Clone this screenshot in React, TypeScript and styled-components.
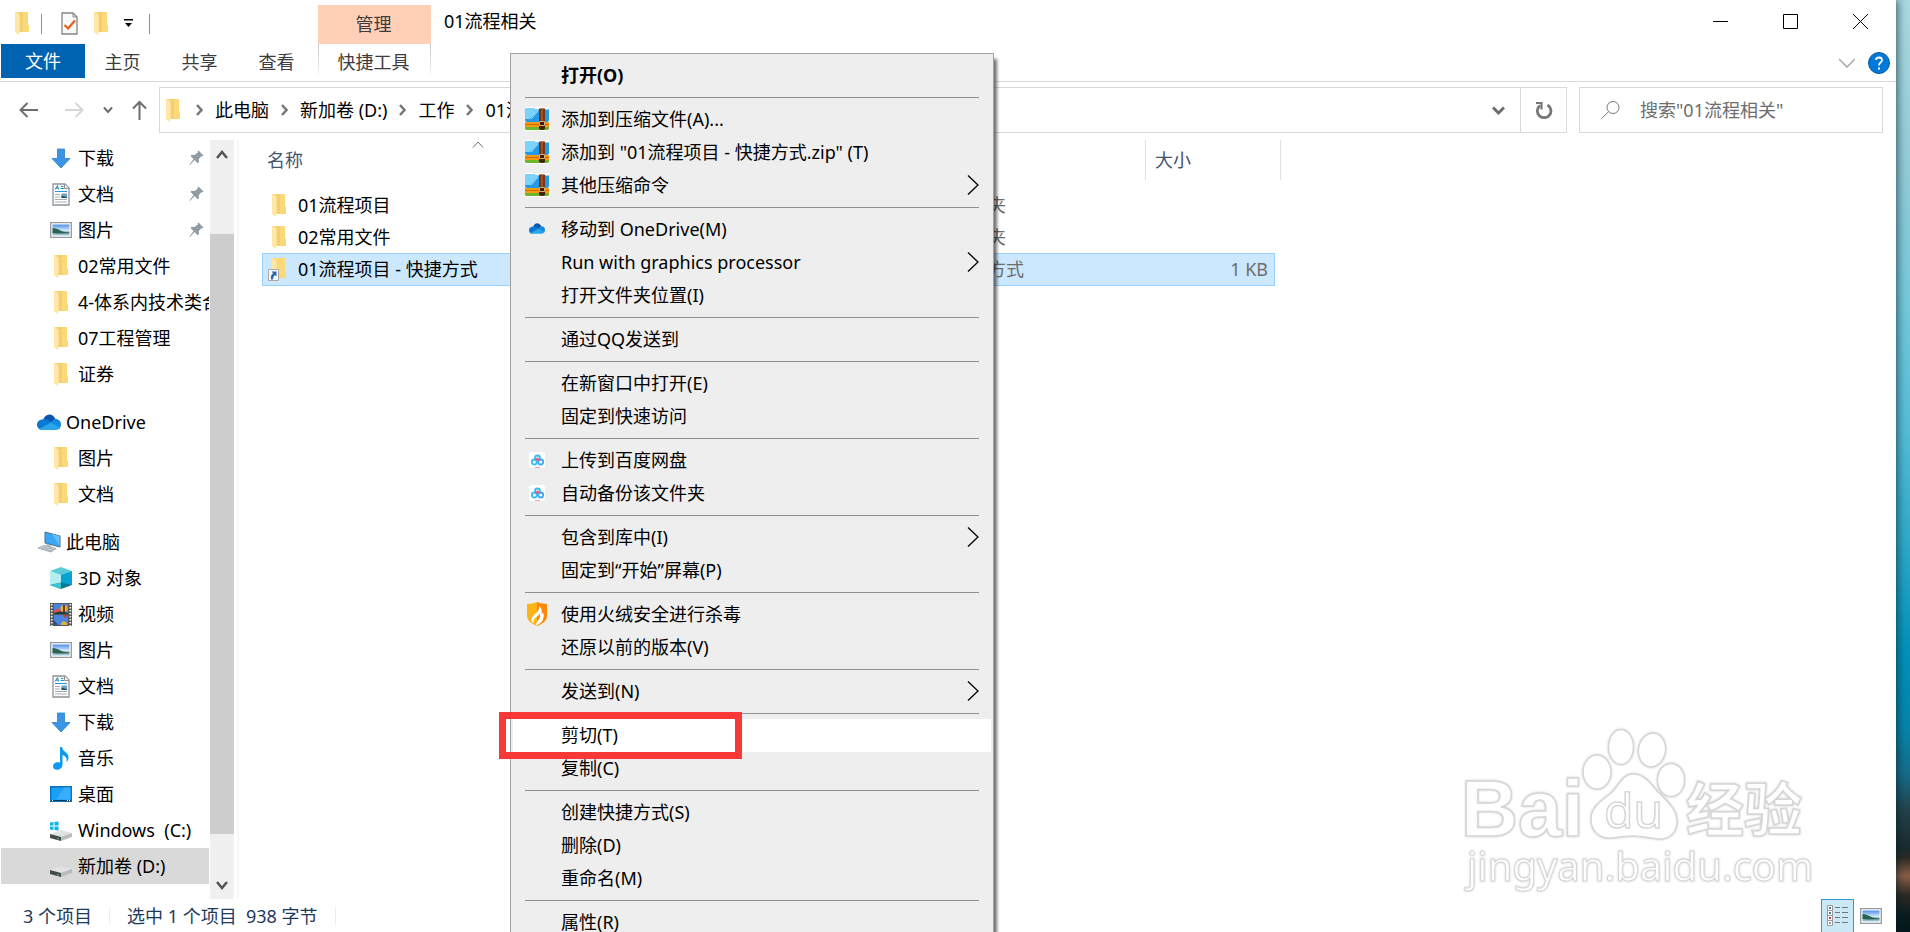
import React from "react";
import styled, { createGlobalStyle, css } from "styled-components";

const FONT = '"Noto Sans", "Noto Sans CJK SC", sans-serif';

const GlobalStyle = createGlobalStyle`
  *, *::before, *::after { box-sizing: border-box; }
  body { margin: 0; overflow: hidden; font-family: ${FONT}; font-size: 18px; line-height: 24px; color: #000; }
  button, input { font: inherit; color: inherit; }
  button { margin: 0; padding: 0; border: 0; background: none; cursor: default; }
  a { color: inherit; text-decoration: none; }
  ul { margin: 0; padding: 0; list-style: none; }
  svg { display: block; flex: none; }
`;

/* ---------- window frame ---------- */

const Desktop = styled.div`
  position: relative;
  display: flex;
  height: 100vh;
  overflow: hidden;
  padding-right: 14px;
  background: linear-gradient(
    #a9d8e0 0%, #93cbd6 18%, #76c8da 32%, #56bcd6 46%, #30a9c8 58%, #0390ba 70%,
    #0685aa 78%, #176d8a 83%, #24414a 87%, #1a2b2e 91%, #2c2a26 92%, #8a5f45 94%, #2f2a25 96%, #0c1d20 98%, #06171b 100%
  );
`;

const Window = styled.main`
  display: flex;
  flex: 1;
  min-width: 0;
  flex-direction: column;
  background: #fff;
  box-shadow: 2px 0 8px rgba(0, 30, 40, 0.6);
`;

const TitleBar = styled.header`
  display: flex;
  height: 44px;
  flex: none;
`;

const QuickAccess = styled.div`
  display: flex;
  width: 318px;
  height: 46px;
  align-items: center;
  padding-left: 15px;
`;

const QuickButton = styled.button<{ $gap: number }>`
  margin-right: ${(p) => p.$gap}px;
`;

const QuickRule = styled.span<{ $gap: number }>`
  width: 1px;
  height: 20px;
  margin-top: 2px;
  margin-right: ${(p) => p.$gap}px;
  background: #8c8c8c;
`;

const ContextGroup = styled.div`
  width: 113px;
  height: 39px;
  margin-top: 5px;
  padding: 7px 2px 0 0;
  background: #ffcfb8;
  color: #3c3c3c;
  text-align: center;
`;

const WindowTitle = styled.h1`
  flex: 1;
  margin: 0;
  padding: 9px 13px;
  font-size: 18px;
  font-weight: 400;
`;

const WindowButtons = styled.div`
  display: flex;
  gap: 1px;
  padding-right: 1px;
`;

const WindowButton = styled.button`
  display: grid;
  width: 69px;
  height: 43px;
  place-items: center;
`;

const Ribbon = styled.nav`
  display: flex;
  height: 38px;
  flex: none;
  border-bottom: 1px solid #d9d9d9;
`;

const RibbonTabs = styled.div`
  display: flex;
  width: 318px;
  padding-left: 1px;
`;

const FileTab = styled.button`
  width: 84px;
  height: 34px;
  background: #0063b1;
  color: #fff;
`;

const RibbonTab = styled.button`
  width: 77px;
  height: 37px;
  padding: 0 2px 2px 0;
  color: #3c3c3c;
`;

const ToolTab = styled.button`
  width: 113px;
  height: 37px;
  padding: 0 2px 2px 0;
  border: solid;
  border-width: 0 1px;
  border-image: linear-gradient(#c8c8c8, #e4e4e4 60%, #fff 90%) 1;
  color: #3c3c3c;
`;

const RibbonTools = styled.div`
  display: flex;
  flex: 1;
  align-items: center;
  justify-content: flex-end;
  gap: 13px;
  padding-right: 6px;
`;

/* ---------- address row ---------- */

const AddressRow = styled.div`
  display: flex;
  height: 58px;
  flex: none;
  padding: 5px 13px 7px 0;
`;

const NavButtons = styled.div`
  display: flex;
  width: 159px;
  align-items: center;
  justify-content: flex-end;
  gap: 19px;
  padding-right: 12px;
`;

const HistoryButtons = styled.div`
  display: flex;
  gap: 27px;
`;

const Box = styled.div`
  display: flex;
  border: 1px solid #d9d9d9;
`;

const AddressBox = styled(Box)`
  flex: 1;
  align-items: center;
  padding-left: 6px;
`;

const Crumbs = styled.div`
  display: flex;
  flex: 1;
  align-items: center;
  gap: 12px;
  padding-left: 16px;
`;

const DropButton = styled.button`
  display: grid;
  width: 44px;
  height: 44px;
  place-items: center;
`;

const RefreshButton = styled(DropButton)`
  width: 46px;
  border-left: 1px solid #d9d9d9;
`;

const SearchBox = styled.label`
  display: flex;
  width: 304px;
  margin-left: 12px;
  align-items: center;
  gap: 20px;
  padding-left: 21px;
  border: 1px solid #d9d9d9;
`;

const SearchInput = styled.input`
  flex: 1;
  min-width: 0;
  padding: 0;
  border: 0;
  outline: 0;
  background: none;
  &::placeholder { color: #6d6d6d; opacity: 1; }
`;

/* ---------- navigation pane ---------- */

const Body = styled.div`
  display: flex;
  flex: 1;
  min-height: 0;
`;

const Tree = styled.ul`
  width: 210px;
  overflow: hidden;
`;

const TreeLink = styled.a<{ $root?: boolean; $active?: boolean }>`
  display: flex;
  height: 36px;
  margin: ${(p) => (p.$root ? "12px 1px 0 1px" : "0 1px")};
  align-items: center;
  padding-left: ${(p) => (p.$root ? 36 : 48)}px;
  white-space: pre;
  overflow: hidden;
  background: ${(p) => (p.$active ? "#d9d9d9" : "transparent")};
`;

const TreeIcon = styled.span`
  display: grid;
  width: 24px;
  flex: none;
  place-items: center;
  margin-right: 5px;
`;

const Pin = styled.span`
  margin-left: auto;
  padding-right: 5px;
`;

const ScrollTrack = styled.div`
  display: flex;
  width: 24px;
  flex-direction: column;
  align-items: center;
  background: #f0f0f0;
`;

const ScrollArrow = styled.button`
  display: grid;
  width: 24px;
  height: 28px;
  place-items: center;
`;

const ScrollThumb = styled.div`
  width: 24px;
  flex: 600;
  background: #cdcdcd;
`;

const ScrollSpace = styled.div<{ $grow: number }>`
  flex: ${(p) => p.$grow};
`;

const PaneRule = styled.div`
  width: 2px;
  margin: 0 23px 0 3px;
  background: #f7f7f7;
`;

/* ---------- file list ---------- */

const FileTable = styled.table`
  width: 1019px;
  flex: none;
  align-self: flex-start;
  table-layout: fixed;
  border-collapse: separate;
  border-spacing: 0;
`;

const Column = styled.col<{ $width: number }>`
  width: ${(p) => p.$width}px;
`;

const HeadCell = styled.th`
  padding: 0 0 9px;
  font-weight: 400;
  text-align: left;
  color: #44546e;
`;

const HeadLabel = styled.div<{ $rule?: boolean }>`
  position: relative;
  height: 40px;
  padding: 8px 9px;
  padding-left: ${(p) => (p.$rule ? 9 : 5)}px;
  border-left: ${(p) => (p.$rule ? "1px solid #e1e1e1" : "0")};
`;

const EndRule = styled.div`
  height: 40px;
  border-right: 1px solid #e1e1e1;
`;

const SortMark = styled.span`
  position: absolute;
  top: 1px;
  left: 210px;
`;

const FileRow = styled.tr<{ $selected?: boolean }>`
  & > td {
    height: 32px;
    padding: 0;
    white-space: nowrap;
    color: #6d6d6d;
    ${(p) =>
      p.$selected &&
      css`
        height: 33px;
        padding-bottom: 1px;
        border: solid #99d1ff;
        border-width: 1px 0;
        background: #cce8ff;
      `}
  }
  & > td:first-child { border-left-width: ${(p) => (p.$selected ? 1 : 0)}px; }
  & > td:nth-child(4) { padding-right: 6px; border-right-width: ${(p) => (p.$selected ? 1 : 0)}px; text-align: right; }
`;

const FileName = styled.div<{ $selected?: boolean }>`
  display: flex;
  align-items: center;
  gap: 9px;
  padding-left: ${(p) => (p.$selected ? 5 : 6)}px;
  color: #000;
`;

const FileIconSlot = styled.span`
  display: flex;
  width: 21px;
  justify-content: flex-end;
  padding-right: 3px;
`;

const TypeText = styled.div`
  padding-left: 7px;
`;

/* ---------- status bar ---------- */

const StatusBar = styled.footer`
  display: flex;
  height: 33px;
  flex: none;
  align-items: center;
  padding: 0 14px 0 23px;
  color: #1e395b;
  white-space: pre;
`;

const StatusRule = styled.span`
  width: 1px;
  height: 18px;
  margin: 0 17px;
  background: #ececec;
`;

const ViewButtons = styled.div`
  display: flex;
  height: 33px;
  margin-left: auto;
  align-items: center;
  gap: 6px;
`;

const ViewButton = styled.button<{ $on?: boolean }>`
  display: grid;
  height: 33px;
  min-width: ${(p) => (p.$on ? 33 : 22)}px;
  place-items: center;
  ${(p) =>
    p.$on &&
    css`
      border: 1px solid #3399cc;
      border-bottom: 0;
      background: #cbe8f6;
    `}
`;

/* ---------- context menu ---------- */

const Menu = styled.div`
  position: absolute;
  top: 53px;
  left: 510px;
  width: 484px;
  padding: 5px 2px;
  border: 1px solid #a0a0a0;
  background: #eee;
  box-shadow: 4px 5px 3px -1px rgba(0, 0, 0, 0.55);
`;

const MenuItem = styled.button<{ $bold?: boolean; $hot?: boolean }>`
  position: relative;
  display: flex;
  width: 100%;
  height: 33px;
  align-items: center;
  padding: 0 12px 2px 12px;
  font-weight: ${(p) => (p.$bold ? 700 : 400)};
  background: ${(p) => (p.$hot ? "#fff" : "transparent")};
  text-align: left;
`;

const MenuIcon = styled.span`
  display: grid;
  width: 24px;
  height: 24px;
  margin-right: 12px;
  place-items: center;
`;

const MenuLabel = styled.span`
  flex: 1;
`;

const MenuRule = styled.hr`
  height: 1px;
  margin: 5px 12px;
  border: 0;
  background: #919191;
`;

const Highlight = styled.span`
  position: absolute;
  top: -7px;
  left: -14px;
  width: 243px;
  height: 47px;
  border: 7px solid #fb3838;
  pointer-events: none;
`;

const Watermark = styled.svg`
  position: absolute;
  right: 96px;
  bottom: 30px;
  filter: drop-shadow(0 0 1px rgba(0, 0, 0, 0.2));
`;

/* ---------- icons ---------- */

const FolderIcon = () => (
  <svg width="14" height="23" viewBox="0 0 14 23">
    <path d="M0 0h13v12.5l1 1V20H3z" fill="#fbd978" />
    <path d="M4 0h4v20H4z" fill="#f3cf72" />
    <path d="M0 0l4.6 2.6v18L3.8 23 0 20.2z" fill="#ffe8a6" />
  </svg>
);

const ShortcutIcon = () => (
  <svg width="18" height="23" viewBox="0 0 18 23">
    <path d="M4 0h13v12.5l1 1V20H4z" fill="#fbd978" />
    <path d="M4 0l4.6 2.6v18L4 20z" fill="#ffe8a6" />
    <path d="M.5 11.500h10v11H.5z" fill="#f8fbff" stroke="#a8a8a8" />
    <path d="M3.500 13.500h5v5l-1.700-1.600Q5 18.500 5 21.500H3Q2 17.500 5.200 15.200z" fill="#2d66a8" />
  </svg>
);

const DownloadIcon = () => (
  <svg width="20" height="21" viewBox="0 0 20 21">
    <path d="M6.500 1h7v9.500H19L10 20 1 10.500h5.500z" fill="#3a96e4" stroke="#2a7fc9" strokeWidth=".8" />
  </svg>
);

const DocumentIcon = () => (
  <svg width="18" height="23" viewBox="0 0 18 23">
    <path d="M1 1h12l4 4v17H1z" fill="#fff" stroke="#8d9298" strokeWidth="1.300" />
    <path d="M12.500 1v4.500H17" fill="#eee" stroke="#8d9298" />
    <path d="M3 8.500h12M8.500 5.500H12M9 3.500h2.500" stroke="#2496d8" strokeWidth="1.200" />
    <path d="M3 6.500L5.500 2.500l1 4M4 5.200h2.500" stroke="#2585bd" fill="none" />
    <path d="M3 11.500h5M3 14h5M3 16.500h12M3 19h12" stroke="#a8adb1" />
    <path d="M9.500 10.500H15v4.500H9.500z" fill="#6fa3c8" />
    <path d="M9.500 12.500l3 1 2.500.5v1H9.500z" fill="#24505f" />
  </svg>
);

const PictureIcon = () => (
  <svg width="22" height="16" viewBox="0 0 22 16">
    <defs>
      <linearGradient id="sky" x2="0" y2="1">
        <stop stopColor="#4e8fe8" />
        <stop offset=".55" stopColor="#d3e9f6" />
        <stop offset=".7" stopColor="#7fa8ba" />
        <stop offset="1" stopColor="#a7cbd8" />
      </linearGradient>
    </defs>
    <path d="M.7.700h20.600v14.600H.7z" fill="#fff" stroke="#969a9e" strokeWidth="1.300" />
    <path d="M2.500 2.500h17v11h-17z" fill="url(#sky)" />
    <path d="M2.500 6c3 0 5 1 8 2.500s6 1.500 9 2v.8l-12 .2-5-.5z" fill="#2c6152" />
  </svg>
);

const CloudIcon = ({ width = 24 }: { width?: number }) => (
  <svg width={width} height={(width * 16) / 24} viewBox="0 0 24 16">
    <path d="M6 6C8-.5 15-2 18.500 5L12 11z" fill="#0a55ad" />
    <path d="M5 5.500c5-1 7 1 13 4.500L4 16C-2 14-1 6 5 5.500z" fill="#0b78d2" />
    <path d="M14 8l4.500-3c6 0 7 7 3.500 10l-7-2z" fill="#1489df" />
    <path d="M2 15l12-6.500 9 5.500q-1 2-4 2H5q-2 0-3-1z" fill="#2aa5ea" />
  </svg>
);

const ComputerIcon = () => (
  <svg width="24" height="22" viewBox="0 0 24 22">
    <path d="M8 1l15 4v11L8 12z" fill="#39a7f5" stroke="#4b7089" />
    <path d="M15 3l7.500 2v10z" fill="#62bdf9" />
    <path d="M10 12.500l4 2v2l-5-2z" fill="#b5bbc2" />
    <path d="M1 17l6-2.500 12 3-5 3.500z" fill="#dce0e6" stroke="#929aa3" strokeWidth=".8" />
    <path d="M4 17l11 3M6 16l11 2.500" stroke="#a4aab3" />
  </svg>
);

const CubeIcon = () => (
  <svg width="22" height="22" viewBox="0 0 22 22">
    <path d="M11 0l11 4-11 5L0 4z" fill="#5ccbd8" />
    <path d="M0 4l11 4v10.500L0 18z" fill="#b5eef0" />
    <path d="M22 4L11 8v10.500L22 18z" fill="#08a3d0" />
    <path d="M0 18l11-2.500L22 18l-11 4z" fill="#08788f" />
    <path d="M0 18l11-2.500V22z" fill="#38c3d6" />
  </svg>
);

const VideoIcon = () => (
  <svg width="22" height="23" viewBox="0 0 22 23">
    <path d="M0 0h22v23H0z" fill="#55585a" />
    <path d="M1.700 1v22M20.300 1v22" stroke="#f2f2f2" strokeWidth="1.700" strokeDasharray="1.600 1.400" />
    <path d="M4 1h14v10H4zM4 12h14v10H4z" fill="#4c85e0" />
    <path d="M4 8l4-3 4 4v2H4z" fill="#d9544f" />
    <path d="M4 10q7-3 14 0v1H4z" fill="#1d3f38" />
    <circle cx="14" cy="5.500" r="3.500" fill="#e8b32b" />
    <path d="M13 2h2v7h-2z" fill="#7b3422" />
    <path d="M13 12h5l-3 3z" fill="#c33b2d" />
    <path d="M11 22c0-5 6-5 6 0z" fill="#e8b32b" />
    <path d="M4 17l4 5H4z" fill="#24507a" />
  </svg>
);

const MusicIcon = () => (
  <svg width="18" height="23" viewBox="0 0 18 23">
    <path d="M8 0h2c.5 5 7 5 6.500 11-.3 3-2 4-2 4 1-5-2-6-4-7v10c-.3 6-9.500 6-9.500 1.500C1 15.500 5 14.500 8 15.500z" fill="#0d9bf2" />
  </svg>
);

const DesktopIcon = () => (
  <svg width="22" height="16" viewBox="0 0 22 16">
    <path d="M.7.700h20.600v14.600H.7z" fill="#18a0fb" stroke="#0b71ba" strokeWidth="1.400" />
    <path d="M14 1.500h6.500v12H6z" fill="#39adfb" />
    <path d="M1 14.500h20" stroke="#0f3b5d" />
    <path d="M2 14.500h1M17 14.500h1M19 14.500h1" stroke="#fff" />
  </svg>
);

const DriveIcon = ({ windows }: { windows?: boolean }) => (
  <svg width="22" height="22" viewBox="0 0 22 22">
    <path d="M0 15l11-4 11 3-11 4.500z" fill="#e0e2e4" />
    <path d="M0 15l11 3v4L0 19z" fill="#45484a" />
    <path d="M11 18l11-4v4l-11 4z" fill="#b9bcbf" />
    <path d="M7 19.500l2 .5" stroke="#36d24b" strokeWidth="1.200" />
    {windows && <path d="M0 3.500l3.500-.5v3.500H0zM4.500 3L8.500 2.500v4h-4zM0 7.500h3.500V11L0 10.500zM4.500 7.500h4v4l-4-.5z" fill="#0bb3ee" />}
  </svg>
);

const PinIcon = () => (
  <svg width="15" height="16" viewBox="0 0 15 16">
    <path d="M9.500.5l5 5-1.500 1-.8-.3-2.500 3 .3 3-1.200 1-3.300-3.200L1 15l-.5-.5L4.500 9 1.600 6l1-1.200 3 .3 3.200-2.600-.3-1z" fill="#8f9ba5" />
  </svg>
);

type ChevronProps = { w: number; h: number; d: string; color?: string; stroke?: number };

const Chevron = ({ w, h, d, color = "#6d6d6d", stroke = 2 }: ChevronProps) => (
  <svg width={w} height={h} viewBox={`0 0 ${w} ${h}`} fill="none" stroke={color} strokeWidth={stroke}>
    <path d={d} />
  </svg>
);

const CrumbArrow = () => <Chevron w={7} h={12} d="M1 1l4.500 5L1 11" stroke={2.500} color="#777" />;

const ZipIcon = () => (
  <svg width="24" height="24" viewBox="0 0 24 24">
    <path d="M0 0h24v24H0z" fill="#fff" />
    <path d="M0 18h24v4l-1 1H1l-1-1z" fill="#6cb52d" />
    <path d="M0 15h24v5H0z" fill="#f89a0b" />
    <path d="M0 17h24v1H0z" fill="#c96a06" />
    <path d="M0 3q0-2 2-2h6q2 0 2.500 1.500H24V13q0 2-2 2H2q-2 0-2-2z" fill="#249ae8" />
    <path d="M0 3q0-2 2-2h6q2 0 2.500 1.500H14L5 12H0z" fill="#7bd3fb" />
    <path d="M6 12L13 4" stroke="#a5e2fc" />
    <path d="M14 1.500h6V22h-6z" fill="#7a3410" />
    <path d="M16 1.500h2V22h-2z" fill="#a1501f" />
    <path d="M14.500 14.500h5v4h-5z" fill="#3d1a0a" stroke="#d9b070" />
    <path d="M14 19h6v3q-3 2-6 0z" fill="#4a1f0a" />
  </svg>
);

const NetdiskIcon = () => (
  <svg width="16" height="16" viewBox="0 0 16 16">
    <rect width="16" height="16" rx="3" fill="#fff" />
    <g fill="none" strokeWidth="1.800">
      <circle cx="8.500" cy="6" r="2.500" stroke="#38b9f5" />
      <circle cx="5.300" cy="10" r="2.500" stroke="#39bdf6" />
      <circle cx="11.700" cy="10" r="2.500" stroke="#3fa9f0" />
      <path d="M6.300 8.200l2.200-1.700 2.200 1.900" stroke="#ee5a7d" />
    </g>
    <path d="M6 15.500h5" stroke="#ee9ab8" />
  </svg>
);

const ShieldIcon = () => (
  <svg width="20" height="24" viewBox="0 0 20 24">
    <path d="M0 2q6 0 10-2 4 2 10 2v12q0 6-10 10Q0 20 0 14z" fill="#fdb515" />
    <path d="M10 0q4 2 10 2v12q0 6-10 10z" fill="#fb8a0c" />
    <path d="M12 4q1 4.500-4 8-4.500 3.500-3.500 7l2 2.500q-1-4 3.500-7 2-1.500 2.500-3 1.500 4-1.500 7-2 2-2 5 7-2.500 7.500-8 .5-3.500-.5-5-1.500 1-1.800 2Q16 7 12 4z" fill="#fff" />
  </svg>
);

/* ---------- data ---------- */

type TreeEntry = { label: string; icon: React.ReactNode; root?: boolean; pinned?: boolean; active?: boolean };

const tree: TreeEntry[] = [
  { label: "下载", icon: <DownloadIcon />, pinned: true },
  { label: "文档", icon: <DocumentIcon />, pinned: true },
  { label: "图片", icon: <PictureIcon />, pinned: true },
  { label: "02常用文件", icon: <FolderIcon /> },
  { label: "4-体系内技术类合同", icon: <FolderIcon /> },
  { label: "07工程管理", icon: <FolderIcon /> },
  { label: "证券", icon: <FolderIcon /> },
  { label: "OneDrive", icon: <CloudIcon />, root: true },
  { label: "图片", icon: <FolderIcon /> },
  { label: "文档", icon: <FolderIcon /> },
  { label: "此电脑", icon: <ComputerIcon />, root: true },
  { label: "3D 对象", icon: <CubeIcon /> },
  { label: "视频", icon: <VideoIcon /> },
  { label: "图片", icon: <PictureIcon /> },
  { label: "文档", icon: <DocumentIcon /> },
  { label: "下载", icon: <DownloadIcon /> },
  { label: "音乐", icon: <MusicIcon /> },
  { label: "桌面", icon: <DesktopIcon /> },
  { label: "Windows  (C:)", icon: <DriveIcon windows /> },
  { label: "新加卷 (D:)", icon: <DriveIcon />, active: true },
];

const files = [
  { name: "01流程项目", type: "文件夹", size: "" },
  { name: "02常用文件", type: "文件夹", size: "" },
  { name: "01流程项目 - 快捷方式", type: "快捷方式", size: "1 KB", selected: true },
];

type MenuEntry = { label: string; icon?: React.ReactNode; sub?: boolean; bold?: boolean; hot?: boolean };

const menu: MenuEntry[][] = [
  [{ label: "打开(O)", bold: true }],
  [
    { label: "添加到压缩文件(A)...", icon: <ZipIcon /> },
    { label: '添加到 "01流程项目 - 快捷方式.zip" (T)', icon: <ZipIcon /> },
    { label: "其他压缩命令", icon: <ZipIcon />, sub: true },
  ],
  [
    { label: "移动到 OneDrive(M)", icon: <CloudIcon width={16} /> },
    { label: "Run with graphics processor", sub: true },
    { label: "打开文件夹位置(I)" },
  ],
  [{ label: "通过QQ发送到" }],
  [{ label: "在新窗口中打开(E)" }, { label: "固定到快速访问" }],
  [
    { label: "上传到百度网盘", icon: <NetdiskIcon /> },
    { label: "自动备份该文件夹", icon: <NetdiskIcon /> },
  ],
  [{ label: "包含到库中(I)", sub: true }, { label: "固定到“开始”屏幕(P)" }],
  [{ label: "使用火绒安全进行杀毒", icon: <ShieldIcon /> }, { label: "还原以前的版本(V)" }],
  [{ label: "发送到(N)", sub: true }],
  [{ label: "剪切(T)", hot: true }, { label: "复制(C)" }],
  [{ label: "创建快捷方式(S)" }, { label: "删除(D)" }, { label: "重命名(M)" }],
  [{ label: "属性(R)" }],
];

const crumbs = ["此电脑", "新加卷 (D:)", "工作", "01流程相关"];

/* ---------- page ---------- */

export default function App() {
  return (
    <Desktop>
      <GlobalStyle />
      <Window>
        <TitleBar>
          <QuickAccess>
            <QuickButton $gap={12} aria-label="文件夹"><FolderIcon /></QuickButton>
            <QuickRule $gap={19} />
            <QuickButton $gap={16} aria-label="属性">
              <svg width="17" height="23" viewBox="0 0 17 23" fill="none">
                <path d="M1 1h11l4 4v17H1z" fill="#fafafa" stroke="#858585" strokeWidth="1.300" />
                <path d="M12 1v4h4" stroke="#858585" />
                <path d="M3.500 13l3.500 3.500L14 8.500" stroke="#f15a16" strokeWidth="2.200" />
              </svg>
            </QuickButton>
            <QuickButton $gap={16} aria-label="新建文件夹"><FolderIcon /></QuickButton>
            <QuickButton $gap={16} aria-label="自定义快速访问工具栏">
              <svg width="9" height="8" viewBox="0 0 9 8">
                <path d="M0 0h9v1.500H0zM1 4h7L4.500 8z" />
              </svg>
            </QuickButton>
            <QuickRule $gap={0} />
          </QuickAccess>
          <ContextGroup>管理</ContextGroup>
          <WindowTitle>01流程相关</WindowTitle>
          <WindowButtons>
            <WindowButton aria-label="最小化"><Chevron w={15} h={15} d="M0 7.500h15" color="#000" stroke={1} /></WindowButton>
            <WindowButton aria-label="最大化"><Chevron w={15} h={15} d="M.5.500h14v14H.5z" color="#000" stroke={1} /></WindowButton>
            <WindowButton aria-label="关闭"><Chevron w={15} h={15} d="M0 0l15 15M15 0L0 15" color="#000" stroke={1} /></WindowButton>
          </WindowButtons>
        </TitleBar>

        <Ribbon>
          <RibbonTabs>
            <FileTab>文件</FileTab>
            <RibbonTab>主页</RibbonTab>
            <RibbonTab>共享</RibbonTab>
            <RibbonTab>查看</RibbonTab>
          </RibbonTabs>
          <ToolTab>快捷工具</ToolTab>
          <RibbonTools>
            <button aria-label="展开功能区"><Chevron w={16} h={10} d="M0 1l8 8 8-8" color="#a6a6a6" stroke={1.500} /></button>
            <button aria-label="帮助">
              <svg width="22" height="22" viewBox="0 0 22 22">
                <circle cx="11" cy="11" r="10.500" fill="#0078d7" stroke="#0a5ca0" />
                <path d="M8 8q0-2.500 3-2.500t3 2.500q0 1.500-1.500 2.500T11 13.500" fill="none" stroke="#fff" strokeWidth="1.800" />
                <path d="M10 15.500h2v2h-2z" fill="#fff" />
              </svg>
            </button>
          </RibbonTools>
        </Ribbon>

        <AddressRow>
          <NavButtons>
            <HistoryButtons>
              <button aria-label="后退"><Chevron w={19} h={16} d="M19 8H1.500M8.500 1L1.500 8l7 7" /></button>
              <button aria-label="前进"><Chevron w={19} h={16} d="M0 8h17.500M10.500 1l7 7-7 7" color="#d6d6d6" /></button>
            </HistoryButtons>
            <button aria-label="最近位置"><Chevron w={10} h={8} d="M1 1.500l4 4.500 4-4.500" /></button>
            <button aria-label="上移"><Chevron w={15} h={20} d="M7.500 20V2M1 8.500L7.500 2 14 8.500" /></button>
          </NavButtons>
          <AddressBox>
            <FolderIcon />
            <Crumbs>
              {crumbs.map((c) => (
                <React.Fragment key={c}>
                  <CrumbArrow />
                  <a href="#path">{c}</a>
                </React.Fragment>
              ))}
            </Crumbs>
            <DropButton aria-label="以前的位置"><Chevron w={13} h={9} d="M1 1.500l5.500 5.500L12 1.500" stroke={3} /></DropButton>
            <RefreshButton aria-label="刷新">
              <svg width="18" height="18" viewBox="0 0 18 18" fill="none" stroke="#777" strokeWidth="2.800">
                <path d="M5 4.500A6.800 6.800 0 1 0 12.500 4" />
                <path d="M1 2h5.500v6.500" strokeWidth="2.200" />
              </svg>
            </RefreshButton>
          </AddressBox>
          <SearchBox>
            <svg width="19" height="18" viewBox="0 0 19 18" fill="none" stroke="#777">
              <circle cx="12" cy="6.500" r="6" />
              <path d="M7.500 10.800L.5 17.500" />
            </svg>
            <SearchInput aria-label="搜索" placeholder={'搜索"01流程相关"'} />
          </SearchBox>
        </AddressRow>

        <Body>
          <Tree>
            {tree.map((t, i) => (
              <li key={i}>
                <TreeLink href="#folder" $root={t.root} $active={t.active}>
                  <TreeIcon>{t.icon}</TreeIcon>
                  {t.label}
                  {t.pinned && <Pin><PinIcon /></Pin>}
                </TreeLink>
              </li>
            ))}
          </Tree>
          <ScrollTrack>
            <ScrollArrow aria-label="向上滚动"><Chevron w={12} h={9} d="M1 8l5-6 5 6" color="#555" stroke={2.500} /></ScrollArrow>
            <ScrollSpace $grow={66} />
            <ScrollThumb />
            <ScrollSpace $grow={37} />
            <ScrollArrow aria-label="向下滚动"><Chevron w={12} h={9} d="M1 1l5 6 5-6" color="#555" stroke={2.500} /></ScrollArrow>
          </ScrollTrack>
          <PaneRule />
          <FileTable>
            <colgroup>
              <Column $width={433} />
              <Column $width={250} />
              <Column $width={200} />
              <Column $width={130} />
              <Column $width={6} />
            </colgroup>
            <thead>
              <tr>
                <HeadCell>
                  <HeadLabel>
                    名称
                    <SortMark><Chevron w={12} h={7} d="M1 6.500l5-5.500 5 5.500" stroke={1} /></SortMark>
                  </HeadLabel>
                </HeadCell>
                <HeadCell />
                <HeadCell />
                <HeadCell><HeadLabel $rule>大小</HeadLabel></HeadCell>
                <HeadCell><EndRule /></HeadCell>
              </tr>
            </thead>
            <tbody>
              {files.map((f) => (
                <FileRow key={f.name} $selected={f.selected}>
                  <td>
                    <FileName $selected={f.selected}>
                      <FileIconSlot>{f.selected ? <ShortcutIcon /> : <FolderIcon />}</FileIconSlot>
                      {f.name}
                    </FileName>
                  </td>
                  <td />
                  <td><TypeText>{f.type}</TypeText></td>
                  <td>{f.size}</td>
                </FileRow>
              ))}
            </tbody>
          </FileTable>
        </Body>

        <StatusBar>
          <span>3 个项目</span>
          <StatusRule />
          <span>选中 1 个项目  938 字节</span>
          <StatusRule />
          <ViewButtons>
            <ViewButton $on aria-label="详细信息">
              <svg width="22" height="22" viewBox="0 0 22 22" fill="none">
                <path d="M.5.500h5v5h-5zM.5 5.500h5v5h-5zM.5 10.500h5v5h-5zM.5 15.500h5v5h-5z" fill="#fff" stroke="#999" />
                <path d="M2 3h2" stroke="#3b7cae" strokeWidth="2" />
                <path d="M2 8h2" stroke="#5a6ea5" strokeWidth="2" />
                <path d="M2 13h2" stroke="#c33" strokeWidth="2" />
                <path d="M2 18h2" stroke="#8a9a70" strokeWidth="2" />
                <path d="M8 2.500h5M15 2.500h6M8 7.500h5M15 7.500h6M8 12.500h5M15 12.500h6M8 17.500h5M15 17.500h6" stroke="#777" />
              </svg>
            </ViewButton>
            <ViewButton aria-label="大缩略图"><PictureIcon /></ViewButton>
          </ViewButtons>
        </StatusBar>
      </Window>

      <Watermark width="350" height="175" viewBox="0 0 350 175" fill="#fff" stroke="#d6d6d6" strokeWidth="1.500">
        <ellipse cx="133" cy="45" rx="14" ry="17" />
        <ellipse cx="157" cy="20" rx="12.500" ry="17.500" />
        <ellipse cx="188" cy="23" rx="13.500" ry="17" transform="rotate(10 188 23)" />
        <ellipse cx="207" cy="53" rx="13.500" ry="16.500" />
        <path d="M169 47c13 0 19 12 26 19s18 16 18 28c0 13-9 19-19 18-9-1-14-3-25-3s-15 2-24 2c-12 0-18-9-18-19 0-13 12-19 20-26s11-19 22-19z" />
        <g fontFamily={FONT} fontWeight="700">
          <text x="-3" y="109" fontSize="79" fontFamily='"Liberation Sans", sans-serif'>Bai</text>
          <text x="140" y="101" fontSize="48" fontWeight="400">du</text>
          <text x="222" y="104" fontSize="58">经验</text>
          <text x="3" y="154" fontSize="40" fontWeight="400" strokeWidth="1">jingyan.baidu.com</text>
        </g>
      </Watermark>

      <Menu role="menu">
        {menu.map((group, g) => (
          <React.Fragment key={g}>
            {g > 0 && <MenuRule />}
            {group.map((m) => (
              <MenuItem key={m.label} role="menuitem" $bold={m.bold} $hot={m.hot}>
                <MenuIcon>{m.icon}</MenuIcon>
                <MenuLabel>{m.label}</MenuLabel>
                {m.sub && <Chevron w={12} h={20} d="M1 .5l10 9.500L1 19.500" color="#000" stroke={1.300} />}
                {m.hot && <Highlight />}
              </MenuItem>
            ))}
          </React.Fragment>
        ))}
      </Menu>
    </Desktop>
  );
}
